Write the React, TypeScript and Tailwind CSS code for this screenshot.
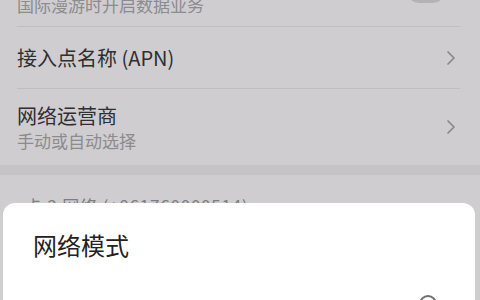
import React from "react";

function Chevron() {
  return (
    <svg width="10" height="16" viewBox="0 0 10 16" fill="none" className="shrink-0">
      <path d="M2 2 L8 8 L2 14" stroke="#89888b" strokeWidth="1.7" strokeLinecap="round" strokeLinejoin="round" />
    </svg>
  );
}

export default function App() {
  return (
    <div className="relative w-[480px] h-[300px] overflow-hidden bg-[#cfcdd0] font-['Noto_Sans_CJK_SC',sans-serif]">
      {/* settings list, dimmed behind the sheet */}
      <div className="-mt-[50px] flex flex-col">
        <div className="ml-[17px] mr-[20px] flex items-center pt-[16px] pb-[10px] border-b border-[#c0bec1]">
          <div className="flex-1 flex flex-col">
            <span className="text-[20px] leading-[28px] text-[#2f2e30]">国际漫游</span>
            <span className="text-[17px] leading-[22px] text-[#8c8b8e]">国际漫游时开启数据业务</span>
          </div>
          <div className="mr-[15px] w-[38px] h-[24px] rounded-full bg-[#b4b2b5]" />
        </div>

        <div className="ml-[17px] mr-[20px] h-[62px] flex items-center border-b border-[#c0bec1]">
          <span className="flex-1 text-[20px] leading-[26px] text-[#2f2e30]">接入点名称 (APN)</span>
          <div className="mr-[4px]">
            <Chevron />
          </div>
        </div>

        <div className="ml-[17px] mr-[20px] h-[76px] flex items-center">
          <div className="flex-1 flex flex-col pt-[1px]">
            <span className="text-[20px] leading-[26px] text-[#2f2e30]">网络运营商</span>
            <span className="text-[17px] leading-[24px] text-[#8c8b8e]">手动或自动选择</span>
          </div>
          <div className="mr-[4px]">
            <Chevron />
          </div>
        </div>

        <div className="h-[10px] bg-[#c5c3c6]" />

        <div className="pl-[25px] pt-[19px]">
          <span className="text-[17px] leading-[22px] tracking-[0.8px] text-[#7e7d80]">卡 2 网络 (+861760000514)</span>
        </div>
      </div>

      {/* network mode sheet */}
      <div className="absolute top-[203px] left-[3px] right-[5px] h-[140px] rounded-[12px] bg-white">
        <div className="px-[30px] pt-[27px]">
          <h2 className="text-[24px] leading-[30px] text-[#222222]">网络模式</h2>
        </div>
        <div className="mt-[35px] pl-[30px] pr-[38px] flex items-start">
          <span className="flex-1 pt-[12px] text-[18px] leading-[24px] text-[#333333]">4G/3G/2G 自动</span>
          <div className="w-[18px] h-[18px] rounded-full border-[2px] border-[#6e6d70]" />
        </div>
      </div>
    </div>
  );
}
